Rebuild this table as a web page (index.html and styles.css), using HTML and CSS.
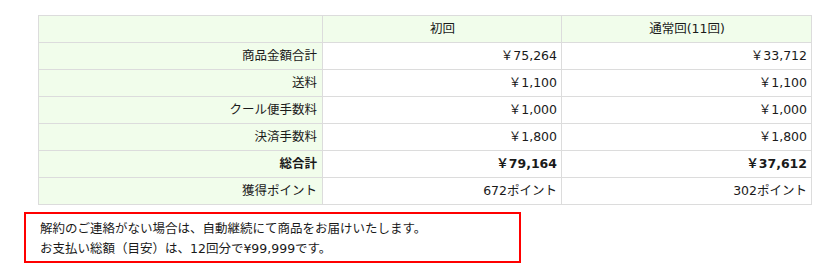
FILE: index.html
```html
<!DOCTYPE html>
<html lang="ja">
<head>
<meta charset="utf-8">
<link rel="stylesheet" href="styles.css">
</head>
<body>
<div class="page">
  <table class="price-table">
    <thead>
      <tr>
        <th class="label"></th>
        <th class="col">初回</th>
        <th class="col">通常回(11回)</th>
      </tr>
    </thead>
    <tbody>
      <tr><th class="label">商品金額合計</th><td>￥75,264</td><td>￥33,712</td></tr>
      <tr><th class="label">送料</th><td>￥1,100</td><td>￥1,100</td></tr>
      <tr><th class="label">クール便手数料</th><td>￥1,000</td><td>￥1,000</td></tr>
      <tr><th class="label">決済手数料</th><td>￥1,800</td><td>￥1,800</td></tr>
      <tr class="total"><th class="label">総合計</th><td>￥79,164</td><td>￥37,612</td></tr>
      <tr><th class="label">獲得ポイント</th><td>672ポイント</td><td>302ポイント</td></tr>
    </tbody>
  </table>
  <div class="notice">
    <p>解約のご連絡がない場合は、自動継続にて商品をお届けいたします。</p>
    <p>お支払い総額（目安）は、12回分で¥99,999です。</p>
  </div>
</div>
</body>
</html>
```

FILE: styles.css
```css
html, body {
  margin: 0;
  padding: 0;
  background: #fff;
}
body {
  font-family: "DejaVu Sans", "Noto Sans CJK JP", sans-serif;
  font-size: 12.5px;
  color: #1a1a1a;
}
.page {
  padding: 15px 11px 0 38px;
}
.price-table {
  width: 774px;
  border-collapse: collapse;
  table-layout: fixed;
}
.price-table th,
.price-table td {
  border: 1px solid #dcdcdc;
  height: 27px;
  padding: 0 4px 0 5px;
  font-weight: normal;
  line-height: 16px;
  box-sizing: border-box;
  white-space: nowrap;
}
.price-table th.label {
  width: 284px;
  background: #f1fdeb;
  text-align: right;
  padding-right: 5px;
}
.price-table thead th.col {
  background: #f1fdeb;
  text-align: center;
}
.price-table thead th.col:nth-child(2) {
  width: 239px;
}
.price-table td {
  text-align: right;
  background: #fff;
}
.price-table tr.total th,
.price-table tr.total td {
  font-weight: bold;
}
.notice {
  margin: 7px 0 0 -14px;
  width: 497px;
  height: 51px;
  box-sizing: border-box;
  border: 2px solid #ff0000;
  padding: 5px 0 0 14px;
}
.notice p {
  margin: 0;
  line-height: 20px;
}
```
